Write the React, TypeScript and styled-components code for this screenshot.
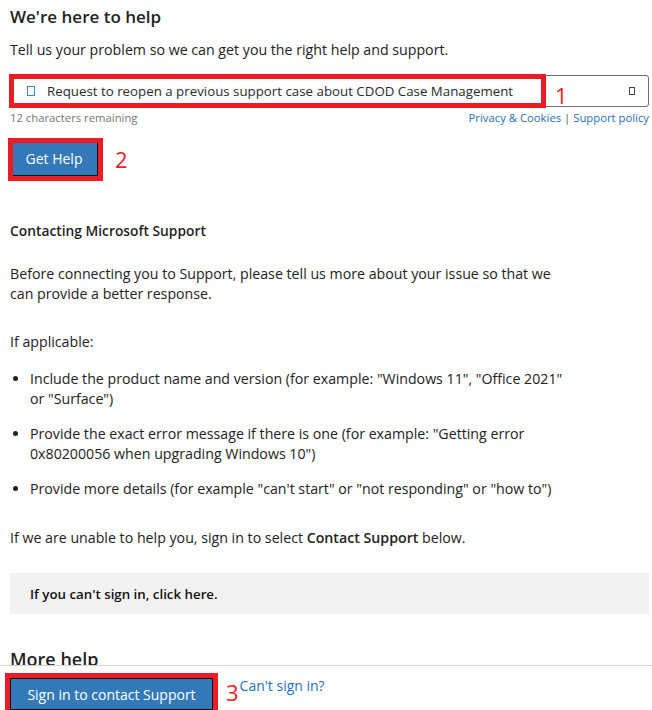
import React from "react";
import styled, { createGlobalStyle } from "styled-components";

const GlobalStyle = createGlobalStyle`
  html, body {
    margin: 0;
    padding: 0;
    background: #ffffff;
  }
  body {
    font-family: "Open Sans", "Noto Sans", sans-serif;
    font-size: 14.2px;
    color: #222222;
  }
  * { box-sizing: border-box; }
`;

const ANNOT_RED = "#ec1c24";
const LINK_BLUE = "#1f6fba";
const BTN_BLUE = "#3379b7";

const Page = styled.div`
  height: 100vh;
  display: flex;
  flex-direction: column;
`;

const Main = styled.main`
  flex: 1;
  min-height: 0;
  overflow: hidden;
  padding: 0 3px 0 10px;
`;

const Title = styled.h1`
  margin: 5px 0 0;
  font-size: 17px;
  font-weight: 600;
  line-height: 24px;
  color: #1f1f1f;
`;

const Intro = styled.p`
  margin: 10px 0 0;
  line-height: 22px;
`;

const InputWrap = styled.div`
  position: relative;
  margin-top: 14px;
`;

const SearchBox = styled.div`
  height: 32px;
  border: 1px solid #6f6f6f;
  border-radius: 3px;
  display: flex;
  align-items: center;
  padding-left: 16px;
  padding-right: 13px;
`;

const LeadGlyph = styled.span`
  width: 8px;
  height: 10px;
  border: 1px solid #3a86d0;
  margin-right: 12px;
  flex: none;
`;

const QueryText = styled.span`
  color: #2b2b2b;
  font-size: 13.3px;
  white-space: nowrap;
`;

const TailGlyph = styled.span`
  margin-left: auto;
  width: 6px;
  height: 8px;
  border: 1px solid #444;
  flex: none;
`;

const AnnotBox = styled.div<{ $l: number; $t: number; $w: number; $h: number }>`
  position: absolute;
  left: ${(p) => p.$l}px;
  top: ${(p) => p.$t}px;
  width: ${(p) => p.$w}px;
  height: ${(p) => p.$h}px;
  border: 5px solid ${ANNOT_RED};
  pointer-events: none;
`;

const AnnotNumber = styled.span`
  color: ${ANNOT_RED};
  font-size: 22px;
  line-height: 22px;
  font-family: "Open Sans", sans-serif;
`;

const FloatingNumber = styled(AnnotNumber)`
  position: absolute;
  left: 545px;
  top: 9px;
`;

const MetaRow = styled.div`
  margin-top: 3px;
  display: flex;
  justify-content: space-between;
  font-size: 11.3px;
  line-height: 16px;
`;

const Remaining = styled.span`
  color: #767676;
`;

const Links = styled.span`
  color: #555;
`;

const Link = styled.a`
  color: ${LINK_BLUE};
  text-decoration: none;
`;

const ActionRow = styled.div`
  margin-top: 15px;
  display: flex;
  align-items: center;
  gap: 17px;
`;

const ButtonWrap = styled.div`
  position: relative;
  display: flex;
`;

const PrimaryButton = styled.button<{ $w: number; $h: number }>`
  width: ${(p) => p.$w}px;
  height: ${(p) => p.$h}px;
  background: ${BTN_BLUE};
  color: #ffffff;
  border: 1px solid #111;
  border-radius: 0;
  font-family: "Open Sans", sans-serif;
  font-size: 14px;
  padding: 0;
  cursor: pointer;
`;

const SectionTitle = styled.h2`
  margin: 45px 0 0;
  font-size: 13.8px;
  font-weight: 600;
  line-height: 20px;
  color: #1f1f1f;
`;

const Body = styled.p<{ $mt: number }>`
  margin: ${(p) => p.$mt}px 0 0;
  max-width: 560px;
  line-height: 20px;
`;

const Strong = styled.strong`
  font-weight: 600;
`;

const Bullets = styled.ul`
  margin: 17px 0 0;
  padding-left: 20px;
  max-width: 560px;
  line-height: 20px;
`;

const Bullet = styled.li`
  & + & {
    margin-top: 15px;
  }
`;

const Callout = styled.div`
  margin-top: 25px;
  height: 41px;
  background: #f2f2f2;
  display: flex;
  align-items: center;
  padding-left: 20px;
  font-size: 13.3px;
  font-weight: 600;
  color: #111;
`;

const MoreHelp = styled.h2`
  margin: 33px 0 0;
  font-size: 18px;
  font-weight: 600;
  line-height: 24px;
  color: #1f1f1f;
`;

const Footer = styled.footer`
  flex: none;
  height: 45px;
  border-top: 1px solid #d4d4d4;
  background: #fff;
  padding: 12px 0 0 10px;
  display: flex;
  align-items: flex-start;
  overflow: hidden;
`;

const FooterNumber = styled(AnnotNumber)`
  margin: 3px 0 0 13px;
`;

const FooterLink = styled(Link)`
  font-size: 14px;
  line-height: 20px;
  margin: -2px 0 0 1px;
`;

export default function App() {
  return (
    <Page>
      <GlobalStyle />
      <Main>
        <Title>We're here to help</Title>
        <Intro>Tell us your problem so we can get you the right help and support.</Intro>

        <InputWrap>
          <SearchBox>
            <LeadGlyph />
            <QueryText>Request to reopen a previous support case about CDOD Case Management</QueryText>
            <TailGlyph />
          </SearchBox>
          <AnnotBox $l={-1} $t={-1} $w={537} $h={34} />
          <FloatingNumber>1</FloatingNumber>
        </InputWrap>

        <MetaRow>
          <Remaining>12 characters remaining</Remaining>
          <Links>
            <Link href="#">Privacy &amp; Cookies</Link> | <Link href="#">Support policy</Link>
          </Links>
        </MetaRow>

        <ActionRow>
          <ButtonWrap>
            <PrimaryButton $w={88} $h={35}>Get Help</PrimaryButton>
            <AnnotBox $l={-2} $t={-3} $w={95} $h={43} />
          </ButtonWrap>
          <AnnotNumber>2</AnnotNumber>
        </ActionRow>

        <SectionTitle>Contacting Microsoft Support</SectionTitle>
        <Body $mt={23}>
          Before connecting you to Support, please tell us more about your issue so that we can provide a
          better response.
        </Body>
        <Body $mt={28}>If applicable:</Body>
        <Bullets>
          <Bullet>Include the product name and version (for example: "Windows 11", "Office 2021" or "Surface")</Bullet>
          <Bullet>
            Provide the exact error message if there is one (for example: "Getting error 0x80200056 when upgrading
            Windows 10")
          </Bullet>
          <Bullet>Provide more details (for example "can't start" or "not responding" or "how to")</Bullet>
        </Bullets>
        <Body $mt={29}>
          If we are unable to help you, sign in to select <Strong>Contact Support</Strong> below.
        </Body>
        <Callout>If you can't sign in, click here.</Callout>
        <MoreHelp>More help</MoreHelp>
      </Main>
      <Footer>
        <ButtonWrap>
          <PrimaryButton $w={203} $h={32}>Sign in to contact Support</PrimaryButton>
          <AnnotBox $l={-5} $t={-5} $w={213} $h={46} />
        </ButtonWrap>
        <FooterNumber>3</FooterNumber>
        <FooterLink href="#">Can't sign in?</FooterLink>
      </Footer>
    </Page>
  );
}
